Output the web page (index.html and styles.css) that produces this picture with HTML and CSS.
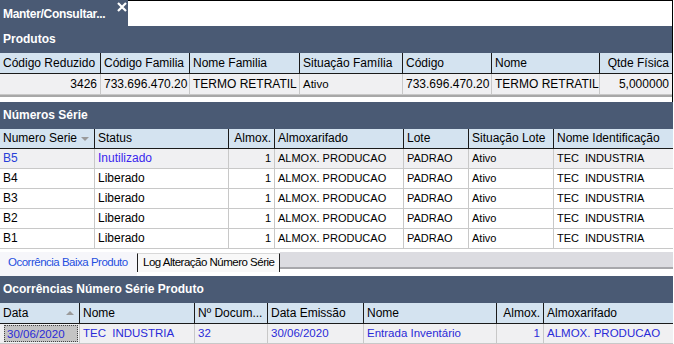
FILE: index.html
```html
<!DOCTYPE html>
<html lang="pt-BR">
<head>
<meta charset="utf-8">
<title>Manter/Consultar</title>
<link rel="stylesheet" href="styles.css">
</head>
<body>
<div class="app">
  <div class="top-block">
    <div class="topbar">
      <div class="doc-tab">
        <span class="doc-tab-label">Manter/Consultar...</span>
        <svg class="close" width="10" height="10" viewBox="0 0 10 10"><path d="M1 1 L9 9 M9 1 L1 9" stroke="#fff" stroke-width="2.2" fill="none"/></svg>
      </div>
      <div class="topbar-rest"></div>
    </div>

    <section class="panel">
      <div class="panel-title">Produtos</div>
      <div class="grid g-prod head tall">
        <div class="c">Código Reduzido</div>
        <div class="c">Código Familia</div>
        <div class="c">Nome Familia</div>
        <div class="c">Situação Família</div>
        <div class="c">Código</div>
        <div class="c">Nome</div>
        <div class="c r">Qtde Física</div>
      </div>
      <div class="grid g-prod row sel tall">
        <div class="c r t">3426</div>
        <div class="c t">733.696.470.20</div>
        <div class="c t">TERMO RETRATIL</div>
        <div class="c b">Ativo</div>
        <div class="c t">733.696.470.20</div>
        <div class="c t">TERMO RETRATIL</div>
        <div class="c r t">5,000000</div>
      </div>
    </section>

    <div class="sep"></div>
  </div>

  <section class="panel">
    <div class="panel-title">Números Série</div>
    <div class="grid g-ns head">
      <div class="c sort">Numero Serie<span class="arrow down"></span></div>
      <div class="c">Status</div>
      <div class="c r">Almox.</div>
      <div class="c">Almoxarifado</div>
      <div class="c">Lote</div>
      <div class="c">Situação Lote</div>
      <div class="c">Nome Identificação</div>
    </div>
    <div class="grid g-ns row sel">
      <div class="c t blue">B5</div>
      <div class="c t purple">Inutilizado</div>
      <div class="c r a">1</div>
      <div class="c a">ALMOX. PRODUCAO</div>
      <div class="c a">PADRAO</div>
      <div class="c a">Ativo</div>
      <div class="c a w">TEC INDUSTRIA</div>
    </div>
    <div class="grid g-ns row">
      <div class="c t">B4</div>
      <div class="c t">Liberado</div>
      <div class="c r a">1</div>
      <div class="c a">ALMOX. PRODUCAO</div>
      <div class="c a">PADRAO</div>
      <div class="c a">Ativo</div>
      <div class="c a w">TEC INDUSTRIA</div>
    </div>
    <div class="grid g-ns row">
      <div class="c t">B3</div>
      <div class="c t">Liberado</div>
      <div class="c r a">1</div>
      <div class="c a">ALMOX. PRODUCAO</div>
      <div class="c a">PADRAO</div>
      <div class="c a">Ativo</div>
      <div class="c a w">TEC INDUSTRIA</div>
    </div>
    <div class="grid g-ns row">
      <div class="c t">B2</div>
      <div class="c t">Liberado</div>
      <div class="c r a">1</div>
      <div class="c a">ALMOX. PRODUCAO</div>
      <div class="c a">PADRAO</div>
      <div class="c a">Ativo</div>
      <div class="c a w">TEC INDUSTRIA</div>
    </div>
    <div class="grid g-ns row">
      <div class="c t">B1</div>
      <div class="c t">Liberado</div>
      <div class="c r a">1</div>
      <div class="c a">ALMOX. PRODUCAO</div>
      <div class="c a">PADRAO</div>
      <div class="c a">Ativo</div>
      <div class="c a w">TEC INDUSTRIA</div>
    </div>
  </section>

  <div class="tabstrip">
    <div class="tab active">Ocorrência Baixa Produto</div>
    <div class="tab">Log Alteração Número Série</div>
    <div class="tab-fill"></div>
  </div>

  <section class="panel">
    <div class="panel-title">Ocorrências Número Série Produto</div>
    <div class="grid g-oc head tall">
      <div class="c sort">Data<span class="arrow up"></span></div>
      <div class="c">Nome</div>
      <div class="c">Nº Docum...</div>
      <div class="c">Data Emissão</div>
      <div class="c">Nome</div>
      <div class="c r">Almox.</div>
      <div class="c">Almoxarifado</div>
    </div>
    <div class="grid g-oc row sel allblue">
      <div class="c b focus"><span class="focus-box">30/06/2020</span></div>
      <div class="c b w">TEC INDUSTRIA</div>
      <div class="c b">32</div>
      <div class="c b">30/06/2020</div>
      <div class="c b">Entrada Inventário</div>
      <div class="c r b">1</div>
      <div class="c b">ALMOX. PRODUCAO</div>
    </div>
  </section>
</div>
</body>
</html>
```

FILE: styles.css
```css
html, body {
  margin: 0;
  padding: 0;
  background: #ffffff;
}

body {
  width: 674px;
  height: 344px;
  overflow: hidden;
  font-family: "Liberation Sans", Arial, sans-serif;
  font-size: 12px;
  color: #000;
}

.app {
  width: 673px;
}

.top-block {
  border-right: 1px solid #000;
}

.topbar {
  display: flex;
  height: 26px;
}

.doc-tab {
  width: 128px;
  background: #4a5a74;
  color: #fff;
  display: flex;
  align-items: flex-start;
  position: relative;
}

.doc-tab-label {
  font-weight: bold;
  font-size: 12px;
  padding: 7px 0 0 3px;
  letter-spacing: -0.3px;
}

.close {
  position: absolute;
  left: 117px;
  top: 2px;
}

.topbar-rest {
  flex: 1;
  border-top: 1px solid #000;
  background: #fff;
}

.panel-title {
  background: #4a5a74;
  color: #fff;
  font-weight: bold;
  font-size: 12px;
  height: 27px;
  line-height: 27px;
  padding-left: 3px;
}

.grid {
  display: grid;
}

.g-prod { grid-template-columns: 101px 89px 110px 103px 89px 108px 1fr; }
.g-ns   { grid-template-columns: 95px 134px 46px 129px 65px 85px 1fr; }
.g-oc   { grid-template-columns: 80px 115px 73px 96px 133px 47px 1fr; }

.c {
  box-sizing: border-box;
  padding: 0 3px;
  white-space: nowrap;
  overflow: hidden;
}

.head .c {
  background: #d4e3f0;
  height: 20px;
  line-height: 19px;
  border-right: 1px solid #1a1a1a;
  border-bottom: 1px solid #1a1a1a;
  font-size: 12px;
}

.head.tall .c {
  height: 21px;
  line-height: 20px;
}

.head .c:last-child { border-right: none; }

.row .c {
  height: 20px;
  line-height: 19px;
  border-right: 1px solid #c8c8c8;
  border-bottom: 1px solid #c8c8c8;
  background: #fff;
}

.row.tall .c {
  height: 21px;
  line-height: 20px;
}

.row .c:last-child { border-right: none; }

.row.sel .c { background: #f0f0f2; }

.r { text-align: right; }

.t { font-size: 12px; }
.a { font-size: 11px; }
.b { font-size: 11.5px; }
.w { word-spacing: 3px; }

.row .c.blue { color: #2840d8; }
.row .c.purple { color: #3a26ee; }
.allblue .c { color: #2a2ad8; }

.sort {
  display: flex;
  align-items: center;
}

.arrow {
  margin-left: auto;
  margin-right: 2px;
  width: 0;
  height: 0;
  border-left: 4px solid transparent;
  border-right: 4px solid transparent;
}

.arrow.down { border-top: 4px solid #9a9a9a; }
.arrow.up { border-bottom: 4px solid #9a9a9a; }

.sep {
  border-top: 2px solid #a8a8a8;
  height: 5px;
}

.tabstrip {
  display: flex;
  align-items: flex-start;
  height: 27px;
  box-sizing: border-box;
  padding-top: 3px;
  background: #fff;
  font-size: 11.5px;
  letter-spacing: -0.5px;
}

.tab {
  box-sizing: border-box;
  width: 143px;
  height: 19px;
  margin-top: 1px;
  line-height: 17px;
  padding-left: 5px;
  background: #f8f8f8;
  border-top: 1px solid #d8d8d8;
  border-left: 1px solid #202020;
  border-right: 1px solid #202020;
}

.tab.active {
  width: 137px;
  height: 24px;
  margin-top: 0;
  line-height: 21px;
  padding-left: 8px;
  color: #1f4fe0;
  background: #f6f6fa;
  border: none;
}

.tab-fill {
  flex: 1;
  height: 17px;
  box-sizing: border-box;
  background: #dcdce1;
  border-bottom: 2px solid #a8a8ac;
}

.focus {
  padding: 1px 1px 1px 4px;
}

.focus-box {
  display: block;
  height: 17px;
  line-height: 16px;
  box-sizing: border-box;
  border: 1px dotted #444;
  background: #c4c4c4;
  padding-left: 2px;
}
```
